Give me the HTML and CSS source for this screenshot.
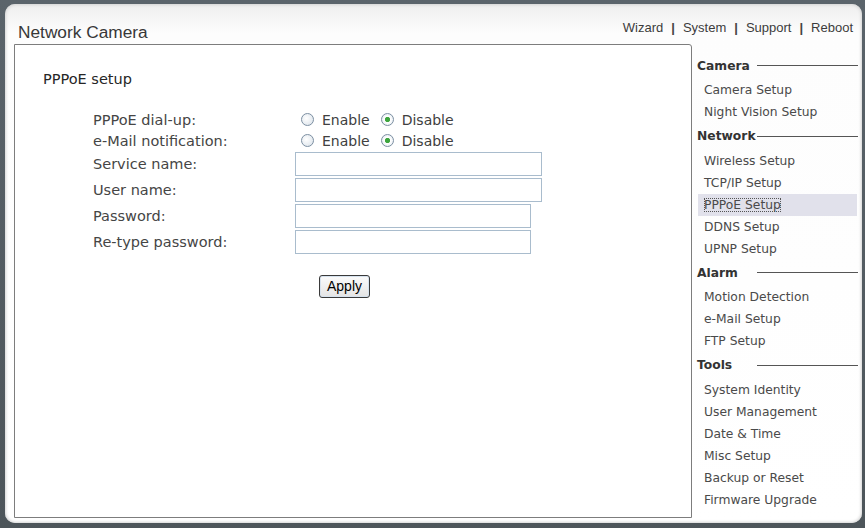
FILE: index.html
```html
<!DOCTYPE html>
<html>
<head>
<meta charset="utf-8">
<title>Network Camera</title>
<link rel="stylesheet" href="styles.css">
</head>
<body>
<div class="window">
  <div class="header">
    <div class="title">Network Camera</div>
    <div class="links">
      <a>Wizard</a><span class="sep">|</span><a>System</a><span class="sep">|</span><a>Support</a><span class="sep">|</span><a>Reboot</a>
    </div>
  </div>
  <div class="body">
    <div class="main">
      <div class="page-title">PPPoE setup</div>
      <div class="form">
        <div class="label radio-row">PPPoE dial-up:</div>
        <div class="field radio-row">
          <input type="radio" class="radio" name="dial"><span class="opt">Enable</span>
          <input type="radio" class="radio" name="dial" checked><span class="opt">Disable</span>
        </div>
        <div class="label radio-row">e-Mail notification:</div>
        <div class="field radio-row">
          <input type="radio" class="radio" name="mail"><span class="opt">Enable</span>
          <input type="radio" class="radio" name="mail" checked><span class="opt">Disable</span>
        </div>
        <div class="label input-row">Service name:</div>
        <div class="field input-row"><input type="text" class="text wide"></div>
        <div class="label input-row">User name:</div>
        <div class="field input-row"><input type="text" class="text wide"></div>
        <div class="label input-row">Password:</div>
        <div class="field input-row"><input type="password" class="text narrow"></div>
        <div class="label input-row">Re-type password:</div>
        <div class="field input-row"><input type="password" class="text narrow"></div>
        <div class="label"></div>
        <div class="field button-row"><button class="apply">Apply</button></div>
      </div>
    </div>
    <div class="sidebar">
      <div class="heading"><span class="htext">Camera</span><span class="hline"></span></div>
      <div class="item">Camera Setup</div>
      <div class="item">Night Vision Setup</div>
      <div class="heading"><span class="htext">Network</span><span class="hline"></span></div>
      <div class="item">Wireless Setup</div>
      <div class="item">TCP/IP Setup</div>
      <div class="item active"><span class="focus">PPPoE Setup</span></div>
      <div class="item">DDNS Setup</div>
      <div class="item">UPNP Setup</div>
      <div class="heading"><span class="htext">Alarm</span><span class="hline"></span></div>
      <div class="item">Motion Detection</div>
      <div class="item">e-Mail Setup</div>
      <div class="item">FTP Setup</div>
      <div class="heading"><span class="htext">Tools</span><span class="hline"></span></div>
      <div class="item">System Identity</div>
      <div class="item">User Management</div>
      <div class="item">Date &amp; Time</div>
      <div class="item">Misc Setup</div>
      <div class="item">Backup or Reset</div>
      <div class="item">Firmware Upgrade</div>
    </div>
  </div>
</div>
</body>
</html>
```

FILE: styles.css
```css
html, body {
  margin: 0;
  padding: 0;
}
body {
  width: 865px;
  height: 528px;
  overflow: hidden;
  background: linear-gradient(#5b646b, #4d555a);
  font-family: "DejaVu Sans", Verdana, sans-serif;
}
.window {
  box-sizing: border-box;
  margin: 4px 3px 0 5px;
  height: 519px;
  border-radius: 10px;
  background: linear-gradient(#eeeeee, #fdfdfd 30px, #ffffff);
  box-shadow: inset 0 0 3px 1px #d4d4d4;
}
.header {
  display: flex;
  justify-content: space-between;
  align-items: flex-start;
  height: 40px;
}
.title {
  margin: 18px 0 0 13px;
  font-family: "Liberation Sans", Arial, sans-serif;
  font-size: 17.3px;
  line-height: 20px;
  color: #383838;
}
.links {
  margin: 16px 9px 0 0;
  font-family: "Liberation Sans", Arial, sans-serif;
  font-size: 13px;
  line-height: 16px;
  color: #3c3c3c;
  display: flex;
}
.links .sep {
  margin: 0 8px 0 8px;
  font-weight: bold;
  color: #444;
}
.body {
  display: flex;
  align-items: flex-start;
}
.main {
  box-sizing: border-box;
  margin-left: 9px;
  width: 678px;
  height: 474px;
  border: 1px solid #7d7d7d;
  border-radius: 0 3px 0 0;
  background: #fff;
  padding: 26px 0 0 28px;
  color: #333;
}
.page-title {
  font-size: 14.5px;
  line-height: 17px;
  color: #262626;
}
.form {
  margin: 21px 0 0 50px;
  display: grid;
  grid-template-columns: 202px auto;
}
.label {
  display: flex;
  align-items: center;
  font-size: 14.5px;
  color: #454545;
}
.field {
  display: flex;
  align-items: center;
}
.radio-row {
  height: 21px;
}
.input-row {
  height: 26px;
}
.radio {
  -webkit-appearance: none;
  appearance: none;
  box-sizing: border-box;
  width: 13px;
  height: 13px;
  margin: 0 8px 0 6px;
  border: 1px solid #7c8fa2;
  border-radius: 50%;
  background: radial-gradient(circle at 40% 40%, #ffffff, #d8e0e8);
}
.radio:checked {
  background: radial-gradient(circle, #3ea53e 0, #3ea53e 2.2px, #ffffff 3px, #dce4ec 100%);
}
.opt + .radio {
  margin-left: 11px;
}
.opt {
  font-size: 14px;
  color: #404040;
}
.text {
  box-sizing: border-box;
  height: 24px;
  margin: 0;
  border: 1px solid #a9bccd;
  background: #fff;
  padding: 0 3px;
}
.wide {
  width: 247px;
}
.narrow {
  width: 236px;
}
.button-row {
  padding-top: 19.5px;
}
.apply {
  margin-left: 24px;
  box-sizing: border-box;
  width: 51px;
  height: 23px;
  padding: 0;
  border: 1px solid #3a3a3a;
  border-radius: 3px;
  background: linear-gradient(#fbfbfb, #e4e4e4);
  box-shadow: inset 0 0 0 1px #d6e2ee;
  font-family: "Liberation Sans", Arial, sans-serif;
  font-size: 14px;
  color: #000;
}
.sidebar {
  margin-left: 5px;
  width: 161px;
  padding-top: 8.5px;
}
.heading {
  display: flex;
  align-items: center;
  height: 26.5px;
  font-size: 12.3px;
  font-weight: bold;
  color: #333;
}
.htext {
  min-width: 60px;
}
.hline {
  flex: 1;
  height: 1px;
  background: #555;
}
.item {
  height: 22px;
  line-height: 22px;
  padding-left: 7px;
  font-size: 12.3px;
  color: #4a4a4a;
}
.item.active {
  margin: 0 1px;
  padding-left: 6px;
  background: #e1e1eb;
}
.focus {
  outline: 1px dotted #555;
  outline-offset: -1px;
}
```
